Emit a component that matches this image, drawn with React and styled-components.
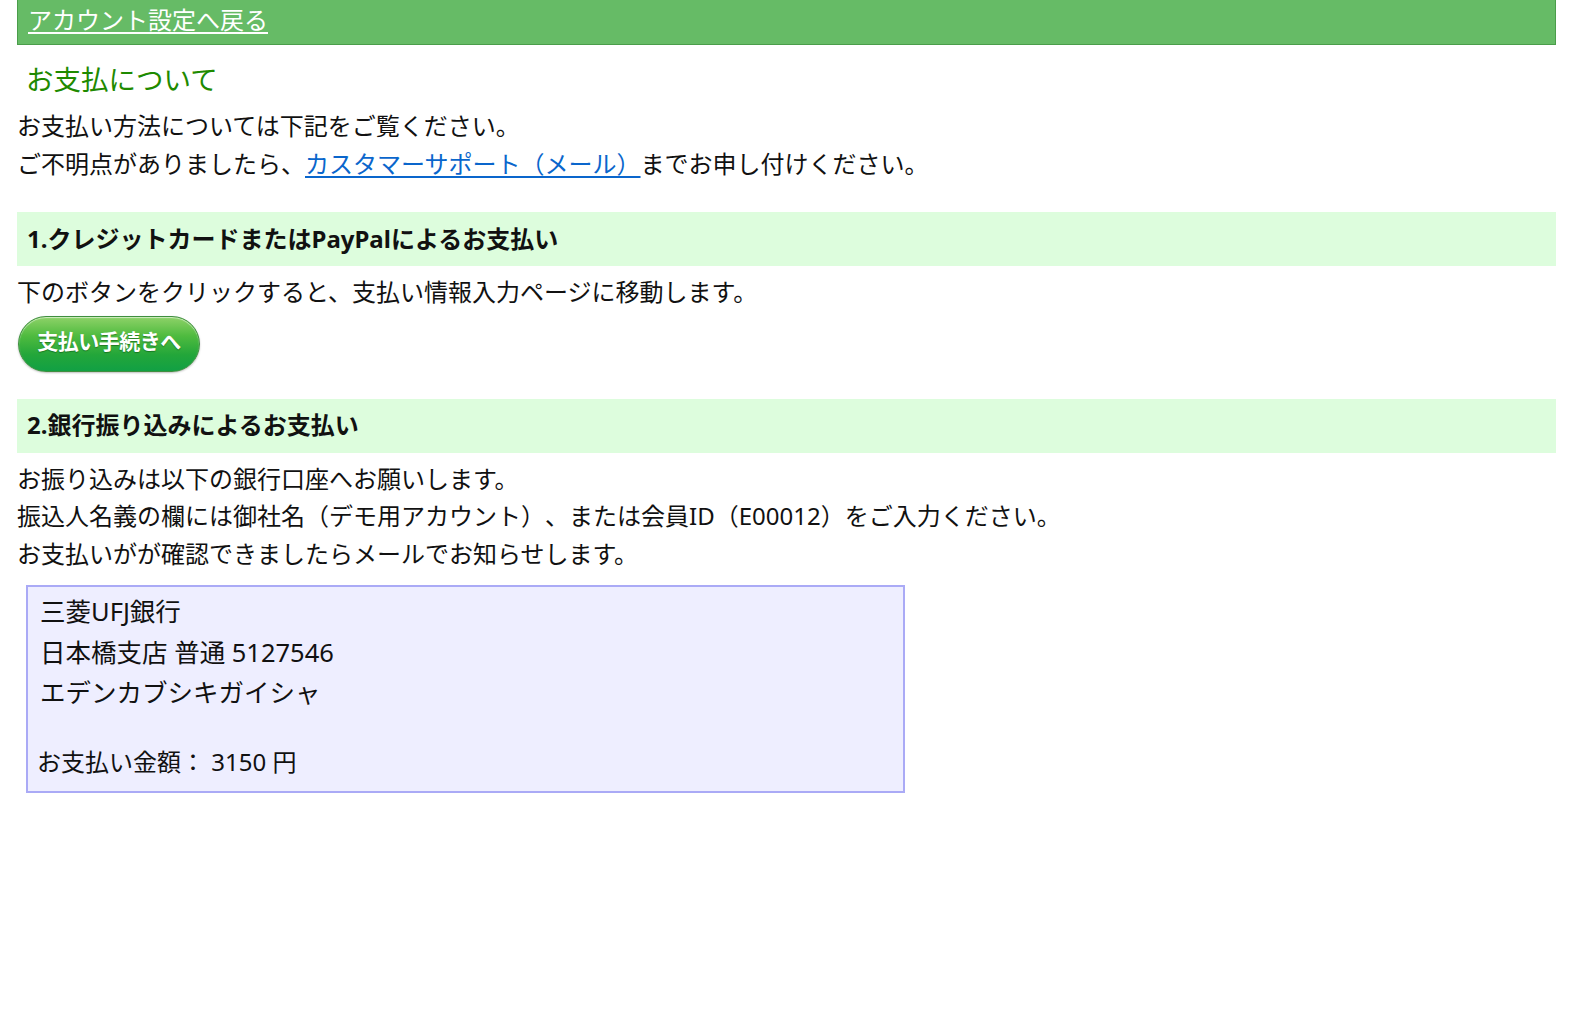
import React from "react";
import styled, { createGlobalStyle } from "styled-components";

const Global = createGlobalStyle`
  html, body { margin: 0; padding: 0; background: #ffffff; }
  body {
    font-family: "Noto Sans", "Noto Sans CJK JP", sans-serif;
    color: #111;
    text-spacing-trim: space-all;
  }
`;

const Page = styled.div`
  padding: 0 18px 0 17px;
`;

const TopBar = styled.div`
  height: 44px;
  background: #66bb66;
  border: 1.5px solid #4a9d4a;
  border-top: none;
  display: flex;
  align-items: center;
  padding-left: 10px;
`;

const BackLink = styled.a`
  color: #ffffff;
  font-size: 24px;
  line-height: 28px;
  text-decoration: underline;
  text-underline-offset: 3px;
  text-decoration-thickness: 1.5px;
  margin-top: -4px;
  cursor: pointer;
`;

const Title = styled.h1`
  margin: 16px 0 0 9px;
  font-weight: normal;
  font-size: 27.5px;
  line-height: 38px;
  color: #1e8a00;
`;

const Paragraph = styled.p`
  margin: ${(p) => p.$mt || "0"} 0 0 0;
  font-size: 24px;
  line-height: 37.5px;
  color: #111;
`;

const Link = styled.a`
  color: #0a66cc;
  text-decoration: underline;
  text-underline-offset: 3px;
  text-decoration-thickness: 1.5px;
  cursor: pointer;
`;

const SectionHead = styled.h2`
  margin: ${(p) => p.$mt || "0"} 0 0 0;
  height: 54px;
  box-sizing: border-box;
  background: #ddfddd;
  display: flex;
  align-items: center;
  padding: 0 0 4px 10px;
  font-size: 24px;
  font-weight: bold;
  color: #111;
`;

const PayButton = styled.button`
  margin: 5px 0 0 1px;
  width: 182px;
  height: 56px;
  border-radius: 28px;
  border: 1.5px solid #3f8f3f;
  background: linear-gradient(#8ed268 0%, #4fbb3f 35%, #23a63a 70%, #11a044 100%);
  box-shadow: inset 0 1px 1px rgba(255, 255, 255, 0.6), 0 1px 2px rgba(0, 0, 0, 0.25);
  color: #ffffff;
  font-family: "Noto Sans CJK JP", sans-serif;
  font-weight: bold;
  font-size: 21px;
  letter-spacing: -0.5px;
  text-shadow: 0 1px 1px rgba(0, 60, 0, 0.45);
  display: flex;
  align-items: center;
  justify-content: center;
  padding: 0 0 7px 0;
  cursor: pointer;
`;

const BankBox = styled.div`
  margin: 13px 0 0 9px;
  width: 879px;
  box-sizing: border-box;
  background: #eeeeff;
  border: 2px solid #aaaaf6;
  padding: 4px 0 9px 12px;
`;

const BankLine = styled.div`
  font-size: 25.5px;
  line-height: 40.5px;
  color: #111;
`;

const Amount = styled.div`
  margin: 29px 0 0 -3px;
  font-size: 24px;
  line-height: 40px;
  color: #111;
`;

export default function App() {
  return (
    <>
      <Global />
      <Page>
        <TopBar>
          <BackLink>アカウント設定へ戻る</BackLink>
        </TopBar>
        <Title>お支払について</Title>
        <Paragraph $mt="8px">お支払い方法については下記をご覧ください。</Paragraph>
        <Paragraph>
          ご不明点がありましたら、<Link>カスタマーサポート（メール）</Link>までお申し付けください。
        </Paragraph>

        <SectionHead $mt="30px">1.クレジットカードまたはPayPalによるお支払い</SectionHead>
        <Paragraph $mt="7px">下のボタンをクリックすると、支払い情報入力ページに移動します。</Paragraph>
        <PayButton>支払い手続きへ</PayButton>

        <SectionHead $mt="27px">2.銀行振り込みによるお支払い</SectionHead>
        <Paragraph $mt="7px">お振り込みは以下の銀行口座へお願いします。</Paragraph>
        <Paragraph>振込人名義の欄には御社名（デモ用アカウント）、または会員ID（E00012）をご入力ください。</Paragraph>
        <Paragraph>お支払いがが確認できましたらメールでお知らせします。</Paragraph>

        <BankBox>
          <BankLine>三菱UFJ銀行</BankLine>
          <BankLine>日本橋支店 普通 5127546</BankLine>
          <BankLine>エデンカブシキガイシャ</BankLine>
          <Amount>お支払い金額： 3150 円</Amount>
        </BankBox>
      </Page>
    </>
  );
}
